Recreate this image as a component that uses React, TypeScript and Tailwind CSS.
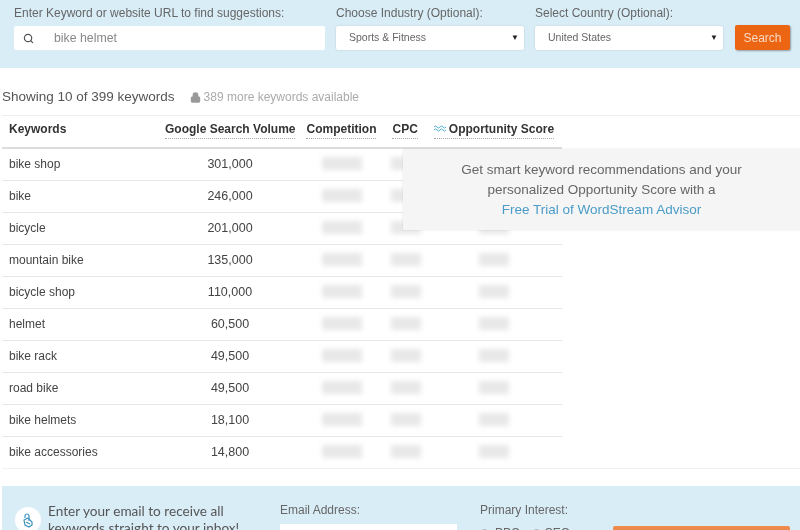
import { Search, Lock } from "lucide-react";

const rows = [
  { kw: "bike shop", vol: "301,000" },
  { kw: "bike", vol: "246,000" },
  { kw: "bicycle", vol: "201,000" },
  { kw: "mountain bike", vol: "135,000" },
  { kw: "bicycle shop", vol: "110,000" },
  { kw: "helmet", vol: "60,500" },
  { kw: "bike rack", vol: "49,500" },
  { kw: "road bike", vol: "49,500" },
  { kw: "bike helmets", vol: "18,100" },
  { kw: "bike accessories", vol: "14,800" },
];

const Wave = () => (
  <svg width="12" height="7" viewBox="0 0 12 7" fill="none" stroke="#4fb3d9" strokeWidth="1">
    <path d="M0 2 Q1.5 0 3 2 T6 2 T9 2 T12 2" />
    <path d="M0 5 Q1.5 3 3 5 T6 5 T9 5 T12 5" />
  </svg>
);

const Select = ({ value }: { value: string }) => (
  <div className="w-[188px] h-6 bg-white rounded-[2px] flex items-center justify-between pl-[13px] pr-[5px] text-[10.5px] text-[#666] shadow-[0_0_2px_rgba(0,0,0,0.15)]">
    <span>{value}</span>
    <span className="text-[8px] text-[#222]">▼</span>
  </div>
);

const App = () => {
  return (
    <div className="h-[530px] w-[800px] overflow-hidden bg-white blur-[0.5px] font-['Liberation_Sans',Arial,sans-serif]">
      <div className="h-[68px] bg-[#d9edf7] pl-[14px] pt-[6px] flex text-[#666]">
        <div className="w-[322px]">
          <div className="text-[12px] leading-[15px]">Enter Keyword or website URL to find suggestions:</div>
          <div className="mt-[5px] h-6 w-[311px] bg-white rounded-[2px] flex items-center text-[12.3px] text-[#888]">
            <Search size={11} strokeWidth={2.6} className="ml-[9px] text-[#555]" />
            <span className="ml-[20px]">bike helmet</span>
          </div>
        </div>
        <div className="w-[199px]">
          <div className="text-[12px] leading-[15px]">Choose Industry (Optional):</div>
          <div className="mt-[5px]">
            <Select value="Sports &amp; Fitness" />
          </div>
        </div>
        <div className="w-[200px]">
          <div className="text-[12px] leading-[15px]">Select Country (Optional):</div>
          <div className="mt-[5px]">
            <Select value="United States" />
          </div>
        </div>
        <div className="pt-[19px]">
          <div className="w-[55px] h-[25px] bg-[#ec6513] rounded-[2px] flex items-center justify-center text-[12px] text-[#fbd9c3] shadow-[1px_1px_2px_rgba(0,0,0,0.35)]">
            Search
          </div>
        </div>
      </div>

      <div className="pl-[2px] pt-[11px] h-[47px] flex items-center">
        <span className="text-[13.5px] text-[#555]">Showing 10 of 399 keywords</span>
        <Lock size={11} strokeWidth={2.5} fill="currentColor" className="ml-[15px] text-[#999]" />
        <span className="ml-[3px] text-[12px] text-[#aaa]">389 more keywords available</span>
      </div>

      <div className="relative ml-[2px] border-t border-[#eee]">
        <div className="w-[560px] h-[33px] pb-[5px] border-b-2 border-[#ddd] flex items-center text-[12px] font-bold text-[#333]">
          <span className="w-[163px] pl-[7px]">Keywords</span>
          <span className="mr-[11px] border-b border-dotted border-[#aaa]">Google Search Volume</span>
          <span className="mr-[16px] border-b border-dotted border-[#aaa]">Competition</span>
          <span className="mr-[16px] border-b border-dotted border-[#aaa]">CPC</span>
          <span className="flex items-center gap-[3px] border-b border-dotted border-[#aaa]">
            <Wave />
            Opportunity Score
          </span>
        </div>

        {rows.map((r) => (
          <div key={r.kw} className="w-[560px] h-[32px] pb-[2px] border-b border-[#e6e6e6] flex items-center text-[12px] text-[#444]">
            <span className="w-[162px] pl-[7px]">{r.kw}</span>
            <span className="w-[132px] pt-[1px] text-center text-[12.5px]">{r.vol}</span>
            <span className="ml-[26px] w-[40px] h-[13px] bg-[#e8e8e8] blur-[2.5px]" />
            <span className="ml-[29px] w-[30px] h-[13px] bg-[#e8e8e8] blur-[2.5px]" />
            <span className="ml-[58px] w-[30px] h-[13px] bg-[#e8e8e8] blur-[2.5px]" />
          </div>
        ))}
        <div className="w-[798px] border-b border-[#f0f0f0] -mt-px" />

        <div className="absolute left-[401px] top-[33px] w-[397px] h-[81px] bg-[#f5f5f5] text-center text-[13.5px] leading-[20px] text-[#666] pt-[11px] shadow-[0_0_2px_rgba(0,0,0,0.1)]">
          <div>Get smart keyword recommendations and your</div>
          <div>personalized Opportunity Score with a</div>
          <div className="text-[#4a9cc7]">Free Trial of WordStream Advisor</div>
        </div>
      </div>

      <div className="mt-[17px] ml-[2px] h-[60px] bg-[#d9edf7] flex text-[#666]">
        <div className="ml-[13px] mt-[21px] w-[26px] h-[26px] rounded-full bg-white flex justify-center pt-[6px] shrink-0">
          <svg width="10" height="15" viewBox="0 0 10 15" fill="none" stroke="#3f93bd" strokeWidth="1.2">
            <path d="M2 5 V3 a2 2 0 0 1 4 0 V8" />
            <path d="M1 7 L5 5 L9 9 V12 L6 14 L2 12 Z" />
            <path d="M3 9 L7 11" />
          </svg>
        </div>
        <div className="ml-[7px] w-[232px] pt-[17px] font-['Lato',sans-serif] text-[13.6px] leading-[17px] text-[#555] whitespace-nowrap">
          <div>Enter your email to receive all</div>
          <div>keywords straight to your inbox!</div>
        </div>
        <div className="w-[200px] pt-[16px]">
          <div className="text-[12px] leading-[16px]">Email Address:</div>
          <div className="mt-[6px] w-[177px] h-6 bg-white" />
        </div>
        <div className="w-[133px] pt-[16px]">
          <div className="text-[12px] leading-[16px]">Primary Interest:</div>
          <div className="mt-[7px] flex items-center text-[12px] leading-[16px]">
            <span className="w-[9px] h-[9px] rounded-full border border-[#aaa] bg-white mr-[6px]" />
            PPC
            <span className="ml-[12px] w-[9px] h-[9px] rounded-full border border-[#aaa] bg-white mr-[4px]" />
            SEO
          </div>
        </div>
        <div className="pt-[40px]">
          <div className="w-[177px] h-6 bg-[#ee8a4e] rounded-[2px]" />
        </div>
      </div>
    </div>
  );
};

export default App;
